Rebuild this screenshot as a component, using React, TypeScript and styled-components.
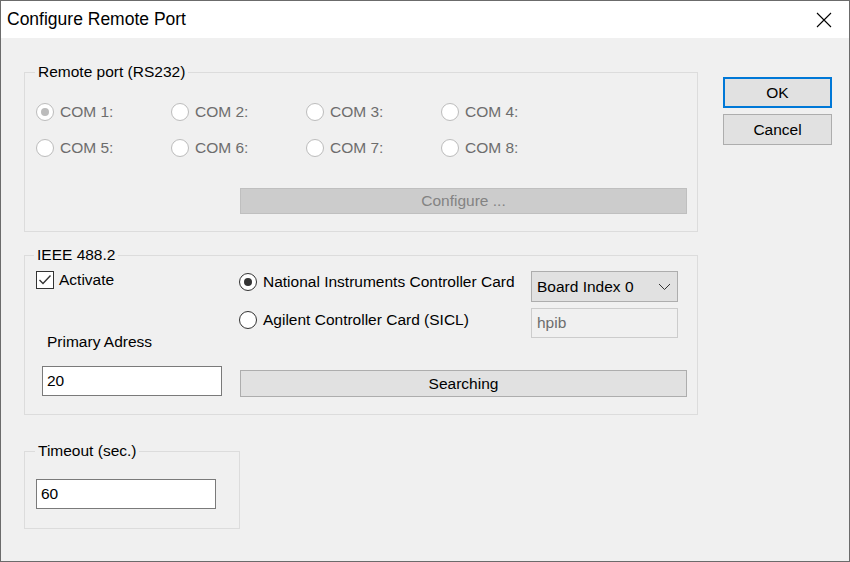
import React from "react";
import styled, { createGlobalStyle } from "styled-components";

const Global = createGlobalStyle`
  html, body { margin: 0; padding: 0; background: #f0f0f0; }
  * { box-sizing: border-box; }
`;

const FONT = `"Liberation Sans", Arial, sans-serif`;

const Window = styled.div`
  width: 850px;
  height: 562px;
  border: 1px solid #6b6b6b;
  background: #f0f0f0;
  display: flex;
  flex-direction: column;
  font-family: ${FONT};
  font-size: 15.5px;
  color: #000;
`;

const TitleBar = styled.div`
  height: 37px;
  flex: none;
  background: #fff;
  display: flex;
  align-items: center;
  justify-content: space-between;
  padding-left: 6px;
`;

const Title = styled.span`
  font-size: 17.5px;
  color: #000;
`;

const CloseButton = styled.div`
  width: 46px;
  height: 37px;
  margin-right: 2px;
  display: flex;
  align-items: center;
  justify-content: center;
`;

const Body = styled.div`
  flex: 1;
  display: flex;
  padding: 34px 0 0 23px;
`;

const LeftColumn = styled.div`
  width: 674px;
  display: flex;
  flex-direction: column;
`;

const ButtonColumn = styled.div`
  margin-left: 25px;
  margin-top: 5px;
  display: flex;
  flex-direction: column;
  gap: 6px;
`;

const DialogButton = styled.div<{ $default?: boolean }>`
  width: 109px;
  height: 31px;
  background: #e1e1e1;
  border: ${(p) => (p.$default ? "2px solid #0078d7" : "1px solid #adadad")};
  display: flex;
  align-items: center;
  justify-content: center;
  font-size: 15.5px;
`;

const GroupBox = styled.div<{ $width?: number; $height: number; $mt?: number; $pt: number }>`
  position: relative;
  width: ${(p) => (p.$width ? `${p.$width}px` : "100%")};
  height: ${(p) => p.$height}px;
  margin-top: ${(p) => p.$mt ?? 0}px;
  border: 1px solid #dcdcdc;
  padding: ${(p) => p.$pt}px 0 0 11px;
`;

const GroupLegend = styled.span<{ $left: number }>`
  position: absolute;
  top: -10px;
  left: ${(p) => p.$left}px;
  padding: 0 3px;
  line-height: 18px;
  background: #f0f0f0;
  color: #000;
`;

const ComGrid = styled.div`
  display: grid;
  grid-template-columns: repeat(4, 135px);
  row-gap: 18px;
`;

const RadioOption = styled.div<{ $disabled?: boolean; $mt?: number }>`
  display: flex;
  align-items: center;
  height: 18px;
  gap: 6px;
  margin-top: ${(p) => p.$mt ?? 0}px;
  color: ${(p) => (p.$disabled ? "#6d6d6d" : "#000")};
  white-space: nowrap;
`;

const RadioCircle = styled.span<{ $checked?: boolean; $disabled?: boolean }>`
  width: 18px;
  height: 18px;
  flex: none;
  border-radius: 50%;
  background: #fff;
  border: 1px solid ${(p) => (p.$disabled ? "#bcbcbc" : "#333")};
  display: flex;
  align-items: center;
  justify-content: center;
  &::after {
    content: "";
    display: ${(p) => (p.$checked ? "block" : "none")};
    width: 8px;
    height: 8px;
    border-radius: 50%;
    background: ${(p) => (p.$disabled ? "#bcbcbc" : "#333")};
  }
`;

const WideButton = styled.div<{ $disabled?: boolean; $mt: number; $ml: number; $h: number }>`
  width: 447px;
  height: ${(p) => p.$h}px;
  margin-top: ${(p) => p.$mt}px;
  margin-left: ${(p) => p.$ml}px;
  background: ${(p) => (p.$disabled ? "#cccccc" : "#e1e1e1")};
  border: 1px solid ${(p) => (p.$disabled ? "#bfbfbf" : "#adadad")};
  color: ${(p) => (p.$disabled ? "#838383" : "#000")};
  display: flex;
  align-items: center;
  justify-content: center;
`;

const IeeeLayout = styled.div`
  display: flex;
`;

const IeeeLeft = styled.div`
  width: 203px;
  display: flex;
  flex-direction: column;
`;

const IeeeRight = styled.div`
  display: flex;
  flex-direction: column;
`;

const CheckRow = styled.div`
  display: flex;
  align-items: center;
  gap: 5px;
  height: 18px;
`;

const CheckBox = styled.span`
  width: 18px;
  height: 18px;
  border: 1px solid #333;
  background: #fff;
  display: flex;
  align-items: center;
  justify-content: center;
`;

const FieldLabel = styled.div`
  margin-top: 44px;
  margin-left: 11px;
  line-height: 18px;
`;

const TextInput = styled.input<{ $ml: number; $mt: number }>`
  width: 180px;
  height: 30px;
  margin: ${(p) => p.$mt}px 0 0 ${(p) => p.$ml}px;
  border: 1px solid #7a7a7a;
  background: #fff;
  padding: 0 0 0 4px;
  font-family: ${FONT};
  font-size: 15.5px;
  color: #000;
  outline: none;
`;

const CardGrid = styled.div`
  display: grid;
  grid-template-columns: 292px 147px;
  grid-template-rows: 31px 30px;
  row-gap: 6px;
  align-items: start;
`;

const Combo = styled.div`
  height: 31px;
  background: #e1e1e1;
  border: 1px solid #adadad;
  display: flex;
  align-items: center;
  justify-content: space-between;
  padding: 0 6px 0 5px;
`;

const DisabledField = styled.div`
  height: 30px;
  border: 1px solid #cccccc;
  background: #f0f0f0;
  color: #6d6d6d;
  display: flex;
  align-items: center;
  padding-left: 5px;
`;

const comPorts = [1, 2, 3, 4, 5, 6, 7, 8];

export default function App() {
  return (
    <>
      <Global />
      <Window>
        <TitleBar>
          <Title>Configure Remote Port</Title>
          <CloseButton>
            <svg width="16" height="16" viewBox="0 0 16 16">
              <path d="M1 1 L15 15 M15 1 L1 15" stroke="#000" strokeWidth="1.1" fill="none" />
            </svg>
          </CloseButton>
        </TitleBar>
        <Body>
          <LeftColumn>
            <GroupBox $height={160} $pt={30}>
              <GroupLegend $left={10}>Remote port (RS232)</GroupLegend>
              <ComGrid>
                {comPorts.map((n) => (
                  <RadioOption key={n} $disabled>
                    <RadioCircle $disabled $checked={n === 1} />
                    COM {n}:
                  </RadioOption>
                ))}
              </ComGrid>
              <WideButton $disabled $mt={31} $ml={204} $h={26}>
                Configure ...
              </WideButton>
            </GroupBox>

            <GroupBox $height={160} $mt={23} $pt={15}>
              <GroupLegend $left={9}>IEEE 488.2</GroupLegend>
              <IeeeLayout>
                <IeeeLeft>
                  <CheckRow>
                    <CheckBox>
                      <svg width="14" height="14" viewBox="0 0 14 14">
                        <path d="M1.5 7 L5 10.5 L12.5 2.5" stroke="#333" strokeWidth="1.4" fill="none" />
                      </svg>
                    </CheckBox>
                    Activate
                  </CheckRow>
                  <FieldLabel>Primary Adress</FieldLabel>
                  <TextInput $ml={6} $mt={15} defaultValue="20" readOnly />
                </IeeeLeft>
                <IeeeRight>
                  <CardGrid>
                    <RadioOption $mt={2}>
                      <RadioCircle $checked />
                      National Instruments Controller Card
                    </RadioOption>
                    <Combo>
                      <span>Board Index 0</span>
                      <svg width="13" height="8" viewBox="0 0 13 8">
                        <path d="M1 1 L6.5 6.5 L12 1" stroke="#333" strokeWidth="1" fill="none" />
                      </svg>
                    </Combo>
                    <RadioOption $mt={3}>
                      <RadioCircle />
                      Agilent Controller Card (SICL)
                    </RadioOption>
                    <DisabledField>hpib</DisabledField>
                  </CardGrid>
                  <WideButton $mt={32} $ml={1} $h={27}>
                    Searching
                  </WideButton>
                </IeeeRight>
              </IeeeLayout>
            </GroupBox>

            <GroupBox $width={216} $height={78} $mt={36} $pt={27}>
              <GroupLegend $left={10}>Timeout (sec.)</GroupLegend>
              <TextInput $ml={0} $mt={0} defaultValue="60" readOnly />
            </GroupBox>
          </LeftColumn>
          <ButtonColumn>
            <DialogButton $default>OK</DialogButton>
            <DialogButton>Cancel</DialogButton>
          </ButtonColumn>
        </Body>
      </Window>
    </>
  );
}
